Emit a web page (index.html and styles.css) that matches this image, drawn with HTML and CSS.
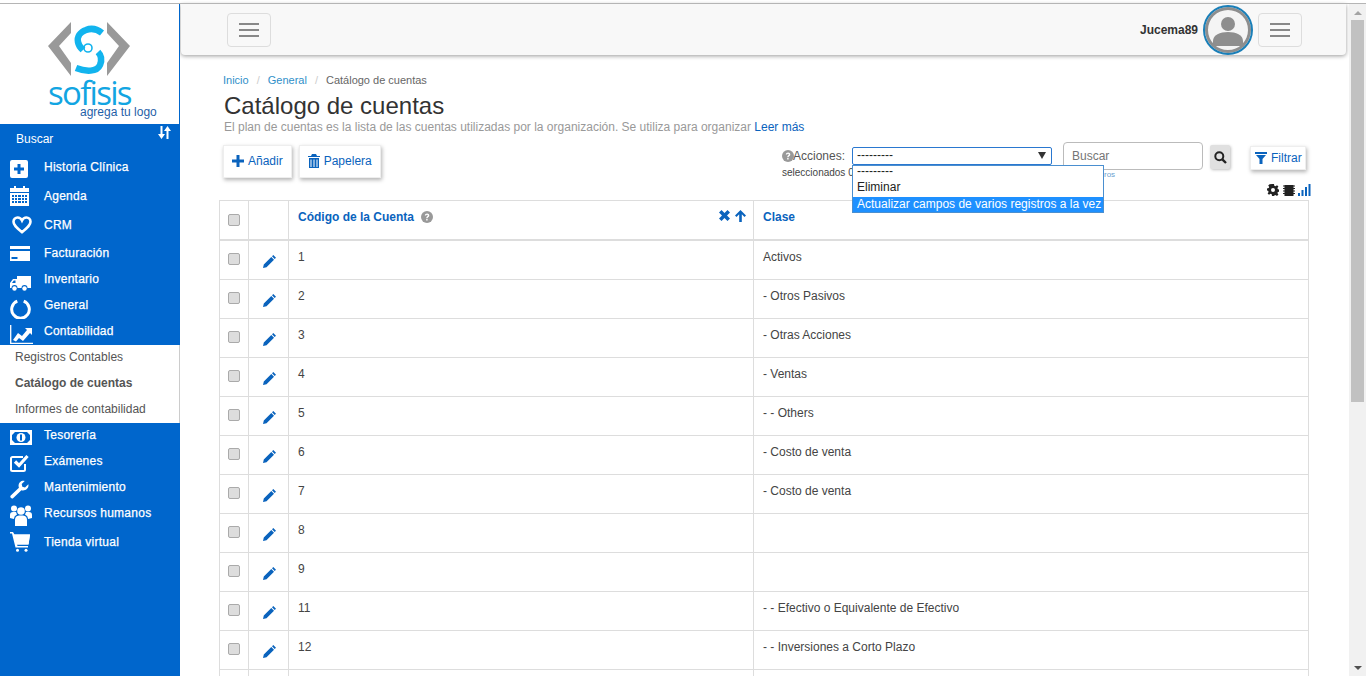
FILE: index.html
```html
<!DOCTYPE html>
<html>
<head>
  <meta charset="UTF-8">
  <title>Catálogo de cuentas</title>
  <link rel="stylesheet" href="styles.css">
</head>
<body>
  <svg class="defs" width="0" height="0">
    <symbol id="pencil" viewBox="0 0 13 13"><path d="M0 13l.8-3.500 7.500-7.500 2.700 2.700-7.500 7.500zM9 1.300L10.300 0 13 2.700 11.700 4z" fill="#0a63bd"/></symbol>
    <symbol id="help" viewBox="0 0 12 12"><circle cx="6" cy="6" r="6" fill="#999"/><path d="M3.800 4.600C3.900 3.200 4.900 2.500 6.100 2.500c1.300 0 2.200.8 2.200 1.900 0 1.600-1.700 1.500-1.700 2.800H5.200c0-2 1.600-1.900 1.600-2.800 0-.4-.3-.7-.8-.7-.5 0-.8.300-.9.900zM5.200 8h1.400v1.400H5.200z" fill="#fff"/></symbol>
  </svg>

  <div class="app">
    <aside class="sidebar">
      <div class="logo">
        <svg class="logo-mark" width="84" height="56" viewBox="0 0 84 56">
          <path d="M23 0 L0 24 L23 54 L23 41 L11 24 L23 11 Z" fill="#999"/>
          <path d="M59 0 L82 24 L59 54 L59 41 L71 24 L59 11 Z" fill="#999"/>
          <path d="M54 11 C49 7 43 6 38 8 C32 10 29 15 30 20 C31 25 34 27 35 28 M50 30 C53 33 54 38 52 43 C49 50 38 50 28 46" fill="none" stroke="#12b4ee" stroke-width="6.500"/>
          <circle cx="40" cy="26" r="4" fill="none" stroke="#12b4ee" stroke-width="1.600"/>
        </svg>
        <span class="logo-name">sofisis</span>
        <span class="logo-sub">agrega tu logo</span>
      </div>
      <div class="search-row">
        <span>Buscar</span>
        <svg class="sort-icon" width="13" height="13" viewBox="0 0 13 13"><path d="M2.500 0h2v8h2.500L3.500 13 0 8h2.500zM8.500 13V5H6L9.500 0 13 5h-2.500v8z" fill="#fff"/></svg>
      </div>
      <nav>
        <a class="menu-item tall">
          <svg class="icon-slight" width="18" height="18" viewBox="0 0 18 18"><path d="M2 0h14a2 2 0 0 1 2 2v14a2 2 0 0 1-2 2H2a2 2 0 0 1-2-2V2a2 2 0 0 1 2-2zm5.500 4v3.500H4v3h3.500V14h3v-3.500H14v-3h-3.500V4z" fill="#fff" fill-rule="evenodd"/></svg>
          Historia Clínica
        </a>
        <a class="menu-item tall">
          <svg width="19" height="20" viewBox="0 0 19 20"><path d="M0 2h4V0h2v2h7V0h2v2h4v4H0zM0 7h19v13H0zm2 2v2h2V9zm3 0v2h2V9zm3 0v2h3V9zm4 0v2h2V9zm3 0v2h2V9zM2 12v2h2v-2zm3 0v2h2v-2zm3 0v2h3v-2zm4 0v2h2v-2zm3 0v2h2v-2zM2 15v2h2v-2zm3 0v2h2v-2zm3 0v2h3v-2zm4 0v2h2v-2zm3 0v2h2v-2z" fill="#fff" fill-rule="evenodd"/></svg>
          Agenda
        </a>
        <a class="menu-item tall">
          <svg class="heart" width="20" height="18" viewBox="0 0 20 18"><path d="M10 16.200C4.200 11.500 1.500 9 1.500 5.800 1.500 3.200 3.400 1.500 5.600 1.500 7.500 1.500 9 2.500 10 4.500c1-2 2.500-3 4.400-3 2.200 0 4.100 1.700 4.100 4.300 0 3.200-2.700 5.700-8.500 10.400z" fill="none" stroke="#fff" stroke-width="2.600"/></svg>
          CRM
        </a>
        <a class="menu-item medium">
          <svg width="20" height="15" viewBox="0 0 20 15"><path d="M0 0h20v3H0zM0 5h20v10H0zm1.500 6v2h6v-2z" fill="#fff" fill-rule="evenodd"/></svg>
          Facturación
        </a>
        <a class="menu-item">
          <svg class="icon-lower" width="21" height="15" viewBox="0 0 21 15"><path d="M7 0h14v12h-3.500a3 3 0 0 0-6 0H7.500a3 3 0 0 0-6 0H0V7l3-4h4zM2 7h3.500V4.500H3.800z" fill="#fff" fill-rule="evenodd"/><circle cx="4.500" cy="12.500" r="2.200" fill="#fff"/><circle cx="14.500" cy="12.500" r="2.200" fill="#fff"/></svg>
          Inventario
        </a>
        <a class="menu-item">
          <svg class="icon-lower" width="21" height="20" viewBox="0 0 21 20"><path d="M7.300 2.200A8.800 8.800 0 1 0 13.700 2.200" fill="none" stroke="#fff" stroke-width="3"/></svg>
          General
        </a>
        <a class="menu-item">
          <svg class="icon-low" width="23" height="19" viewBox="0 0 23 19"><path d="M.7 0v18.300H23" fill="none" stroke="#fff" stroke-width="1.300"/><path d="M3 15l5-7 4 3 5-6-2-2h7v7l-2-2-7 8-4-3-3 3.500z" fill="#fff"/></svg>
          Contabilidad
        </a>
      </nav>
      <div class="submenu">
        <a>Registros Contables</a>
        <a class="current">Catálogo de cuentas</a>
        <a>Informes de contabilidad</a>
      </div>
      <nav>
        <a class="menu-item">
          <svg class="icon-slight" width="22" height="15" viewBox="0 0 22 15"><path d="M0 0h22v15H0zm5 2L2 5v5l3 3h12l3-3V5l-3-3z" fill="#fff" fill-rule="evenodd"/><circle cx="11" cy="7.500" r="4.500" fill="#fff"/><path d="M10 4.500h2v6h-2z" fill="#0066cc"/></svg>
          Tesorería
        </a>
        <a class="menu-item">
          <svg class="icon-slight" width="19" height="18" viewBox="0 0 19 18"><path d="M15 10v5.500a1.500 1.500 0 0 1-1.500 1.500H2.500A1.500 1.500 0 0 1 1 15.500v-11A1.500 1.500 0 0 1 2.500 3H13" fill="none" stroke="#fff" stroke-width="2"/><path d="M5 7.500l4 4L17.500 2" fill="none" stroke="#fff" stroke-width="3.200"/></svg>
          Exámenes
        </a>
        <a class="menu-item">
          <svg class="icon-low" width="19" height="20" viewBox="0 0 20 20"><path d="M19.300 4l-3.500 3.300L13 6.500l-.7-2.700L15.500.5C12.500-.5 9 1.800 9 5.500c0 .8.200 1.500.400 2L.8 15.800c-1.500 1.500.8 4.500 2.700 2.700l8.500-8.300c3.800 1.200 8.300-1.700 7.300-6.200z" fill="#fff"/></svg>
          Mantenimiento
        </a>
        <a class="menu-item">
          <svg class="icon-slight" width="22" height="21" viewBox="0 0 22 21"><circle cx="11" cy="6" r="3.800" fill="#fff"/><circle cx="4" cy="3.500" r="3" fill="#fff"/><circle cx="18" cy="3.500" r="3" fill="#fff"/><path d="M5 21v-6a4.500 4.500 0 0 1 4-4.500h4a4.500 4.500 0 0 1 4 4.500v6zM0 13v-3a3 3 0 0 1 3-3h3l1 2.500A5.500 5.500 0 0 0 3.800 14zM22 13v-3a3 3 0 0 0-3-3h-3l-1 2.500a5.500 5.500 0 0 1 3.200 4.500z" fill="#fff"/></svg>
          Recursos humanos
        </a>
        <a class="menu-item tallest">
          <svg width="20" height="20" viewBox="0 0 20 20"><path d="M0 0h3l1.500 2.500H20l-1.500 10H7L7.500 14H18v1.500H5.500L2 1.500H0z" fill="#fff"/><path d="M4 2.500h16l-1.500 10H6z" fill="#fff"/><circle cx="7.500" cy="18.300" r="1.500" fill="#fff"/><circle cx="16" cy="18.300" r="1.500" fill="#fff"/></svg>
          Tienda virtual
        </a>
      </nav>
    </aside>

    <main class="main">
      <header class="topbar">
        <button class="burger"><i></i><i></i><i></i></button>
        <div class="user">
          <b>Jucema89</b>
          <span class="avatar">
            <svg width="32" height="32" viewBox="0 0 32 32"><circle cx="16" cy="8" r="7" fill="#8e8e8e"/><path d="M1 30c0-1 0-3 0-5 0-6 7-9 15-9s15 3 15 9v5z" fill="#8e8e8e"/></svg>
          </span>
          <button class="burger"><i></i><i></i><i></i></button>
        </div>
      </header>

      <div class="content">
        <div class="crumbs"><a>Inicio</a><em>/</em><a>General</a><em>/</em><span>Catálogo de cuentas</span></div>
        <h1>Catálogo de cuentas</h1>
        <p class="lead">El plan de cuentas es la lista de las cuentas utilizadas por la organización. Se utiliza para organizar <a>Leer más</a></p>

        <div class="toolbar">
          <div class="buttons">
            <button class="btn">
              <svg width="12" height="12" viewBox="0 0 12 12"><path d="M4.500 0h3v4.500H12v3H7.500V12h-3V7.500H0v-3h4.500z" fill="#0a63bd"/></svg>
              Añadir
            </button>
            <button class="btn">
              <svg width="12" height="14" viewBox="0 0 12 14"><path d="M4 0h4l1 2h3v1H0V2h3zM1 4h10v10H1zM2.500 5.500V13h1V5.500zm3 0V13h1V5.500zm3 0V13h1V5.500z" fill="#0a63bd" fill-rule="evenodd"/></svg>
              Papelera
            </button>
          </div>
          <div class="actions">
            <div class="action-box">
              <div class="action-line">
                <svg class="help" width="12" height="12"><use href="#help"/></svg>
                <label>Acciones:</label>
                <div class="select">---------<span class="caret"></span>
                  <div class="options">
                    <div class="opt-dash">---------</div>
                    <div class="opt-plain">Eliminar</div>
                    <div class="selected">Actualizar campos de varios registros a la vez</div>
                  </div>
                </div>
              </div>
              <small class="selected-count">seleccionados 0</small>
            </div>
            <div class="search-box">
              <input class="search" placeholder="Buscar">
              <small class="search-hint">ros</small>
            </div>
            <button class="search-btn">
              <svg width="13" height="13" viewBox="0 0 13 13"><circle cx="5.300" cy="5.300" r="4" fill="none" stroke="#222" stroke-width="2"/><path d="M8.300 8.300L12 12" stroke="#222" stroke-width="2.400"/></svg>
            </button>
            <button class="btn filter">
              <svg width="12" height="12" viewBox="0 0 12 12"><path d="M0 0h12v2H0zM1 3h10L7.500 7v5h-3V7z" fill="#0a63bd"/></svg>
              Filtrar
            </button>
          </div>
        </div>

        <div class="tools">
          <svg width="12" height="12" viewBox="0 0 12 12"><path d="M5 0h2l.3 1.700 1.200.5L10 1.200l1.400 1.400-1 1.500.5 1.200 1.700.3v2l-1.700.3-.5 1.200 1 1.500-1.400 1.400-1.500-1-1.200.5L7 12H5l-.3-1.700-1.200-.5-1.500 1L.6 9.400l1-1.500-.5-1.200L0 6.400v-2l1.700-.3.500-1.200-1-1.500L2.600.200zM6 4a2 2 0 1 0 0 4 2 2 0 0 0 0-4z" fill="#222" fill-rule="evenodd"/></svg>
          <svg class="chip" width="12" height="11" viewBox="0 0 12 11"><path d="M1.500 0h9v11h-9zM0 .5h1.500v1H0zM0 3h1.500v1H0zM0 5.500h1.500v1H0zM0 8h1.500v1H0zM10.500 .5H12v1h-1.500zM10.500 3H12v1h-1.500zM10.500 5.500H12v1h-1.500zM10.500 8H12v1h-1.500z" fill="#222"/></svg>
          <svg width="13" height="12" viewBox="0 0 13 12"><path d="M0 9h2v3H0zM3.500 6h2v6h-2zM7 3h2v9H7zM10.500 0h2v12h-2z" fill="#0a63bd"/></svg>
        </div>

        <table class="grid">
          <thead>
            <tr>
              <th class="c-check"><span class="check"></span></th>
              <th class="c-edit"></th>
              <th class="c-code">
                <div class="th-inner">
                  <span>Código de la Cuenta<svg class="help th-help" width="12" height="12"><use href="#help"/></svg></span>
                  <span class="sort-tools">
                    <svg width="11" height="11" viewBox="0 0 11 11"><path d="M2.500 0L5.500 3l3-3L11 2.500l-3 3 3 3L8.500 11l-3-3-3 3L0 8.500l3-3-3-3z" fill="#0a63bd"/></svg>
                    <svg width="11" height="12" viewBox="0 0 11 12"><path d="M5.500 0L11 5.500 9.500 7 6.800 4.300V12H4.200V4.300L1.500 7 0 5.500z" fill="#0a63bd"/></svg>
                  </span>
                </div>
              </th>
              <th>Clase</th>
            </tr>
          </thead>
          <tbody>
            <tr><td><span class="check"></span></td><td><svg class="pencil" width="13" height="13"><use href="#pencil"/></svg></td><td>1</td><td>Activos</td></tr>
            <tr><td><span class="check"></span></td><td><svg class="pencil" width="13" height="13"><use href="#pencil"/></svg></td><td>2</td><td>- Otros Pasivos</td></tr>
            <tr><td><span class="check"></span></td><td><svg class="pencil" width="13" height="13"><use href="#pencil"/></svg></td><td>3</td><td>- Otras Acciones</td></tr>
            <tr><td><span class="check"></span></td><td><svg class="pencil" width="13" height="13"><use href="#pencil"/></svg></td><td>4</td><td>- Ventas</td></tr>
            <tr><td><span class="check"></span></td><td><svg class="pencil" width="13" height="13"><use href="#pencil"/></svg></td><td>5</td><td>- - Others</td></tr>
            <tr><td><span class="check"></span></td><td><svg class="pencil" width="13" height="13"><use href="#pencil"/></svg></td><td>6</td><td>- Costo de venta</td></tr>
            <tr><td><span class="check"></span></td><td><svg class="pencil" width="13" height="13"><use href="#pencil"/></svg></td><td>7</td><td>- Costo de venta</td></tr>
            <tr><td><span class="check"></span></td><td><svg class="pencil" width="13" height="13"><use href="#pencil"/></svg></td><td>8</td><td></td></tr>
            <tr><td><span class="check"></span></td><td><svg class="pencil" width="13" height="13"><use href="#pencil"/></svg></td><td>9</td><td></td></tr>
            <tr><td><span class="check"></span></td><td><svg class="pencil" width="13" height="13"><use href="#pencil"/></svg></td><td>11</td><td>- - Efectivo o Equivalente de Efectivo</td></tr>
            <tr><td><span class="check"></span></td><td><svg class="pencil" width="13" height="13"><use href="#pencil"/></svg></td><td>12</td><td>- - Inversiones a Corto Plazo</td></tr>
            <tr><td></td><td></td><td></td><td></td></tr>
          </tbody>
        </table>
      </div>
    </main>

    <div class="scrollbar">
      <span class="arrow-up"></span>
      <span class="thumb"></span>
      <span class="arrow-down"></span>
    </div>
  </div>
</body>
</html>
```

FILE: styles.css
```css
* {
  box-sizing: border-box;
}

html, body {
  margin: 0;
  height: 100%;
  overflow: hidden;
}

body {
  font-family: "Liberation Sans", Arial, sans-serif;
  font-size: 12px;
  color: #333;
  background: #fff;
}

a {
  color: #0a63bd;
  text-decoration: none;
}

button {
  font-family: inherit;
}

.defs {
  position: absolute;
}

.app {
  position: relative;
  display: flex;
  height: 676px;
  padding-top: 3px;
  background: #fff;
  overflow: hidden;
}

/* thin line above everything */
.app::before {
  content: "";
  position: absolute;
  top: 3px;
  left: 0;
  right: 0;
  height: 1px;
  background: #b5b5b5;
  z-index: 5;
}

/* sidebar */
.sidebar {
  width: 180px;
  flex: none;
  background: #0066cc;
  color: #fff;
}

.logo {
  position: relative;
  height: 121px;
  background: #fff;
  border-right: 1px solid #0066cc;
}

.logo-mark {
  position: absolute;
  left: 48px;
  top: 19px;
}

.logo-name {
  position: absolute;
  left: 48px;
  top: 79px;
  font-family: "Open Sans", sans-serif;
  font-size: 33px;
  letter-spacing: -1.7px;
  line-height: 22px;
  color: #12a5e2;
}

.logo-sub {
  position: absolute;
  left: 80px;
  top: 102px;
  font-size: 12px;
  line-height: 14px;
  color: #1f5fa8;
}

.search-row {
  position: relative;
  height: 28px;
  padding: 8px 0 0 16px;
  font-size: 12px;
}

.sort-icon {
  position: absolute;
  right: 9px;
  top: 2px;
}

.menu-item {
  display: grid;
  grid-template-columns: 34px 1fr;
  grid-template-rows: minmax(0, 1fr);
  align-items: center;
  height: 26px;
  padding: 0 0 2px 10px;
  color: #fff;
  font-size: 12px;
  letter-spacing: .25px;
  -webkit-text-stroke: .25px #fff;
}

.icon-slight {
  margin-top: 4px;
}

.icon-low {
  margin-top: 6px;
}

.icon-lower {
  margin-top: 8px;
}

.heart {
  margin-left: 2px;
}

.tall {
  height: 29px;
  padding-bottom: 0;
}

.medium {
  height: 28px;
  padding-bottom: 0;
}

.tallest {
  height: 31px;
}

.submenu {
  background: #fff;
  border-right: 1px solid #ccc;
}

.submenu a {
  display: flex;
  align-items: center;
  height: 26px;
  padding: 0 0 2px 15px;
  color: #555;
  font-size: 12px;
}

.submenu .current {
  font-weight: bold;
}

/* main */
.main {
  flex: 1;
  min-width: 0;
  padding-top: 1px;
}

.topbar {
  display: flex;
  align-items: center;
  justify-content: space-between;
  height: 51px;
  margin-left: 1px;
  margin-right: 3px;
  padding: 0 44px 0 46px;
  background: #f8f8f8;
  border-radius: 0 0 4px 4px;
  box-shadow: 0 1px 4px rgba(0, 0, 0, .4);
}

.burger {
  display: flex;
  flex-direction: column;
  justify-content: center;
  gap: 4px;
  width: 44px;
  height: 34px;
  padding: 0 11px;
  background: #f8f8f8;
  border: 1px solid #ddd;
  border-radius: 4px;
}

.burger i {
  display: block;
  height: 2px;
  width: 100%;
  background: #888;
}

.user {
  display: flex;
  align-items: center;
}

.user b {
  font-size: 12px;
  margin-right: 5px;
}

.avatar {
  display: flex;
  align-items: flex-end;
  justify-content: center;
  width: 50px;
  height: 50px;
  margin-right: 5px;
  padding-bottom: 5px;
  background: #f4f4f4;
  border-radius: 50%;
  border: 2px solid #1a7fb8;
  box-shadow: inset 0 0 0 3px #8e8e8e;
  overflow: hidden;
}

.content {
  padding: 0 40px 0 38px;
}

.crumbs {
  margin: 18px 0 0 5px;
  height: 14px;
  font-size: 11px;
  line-height: 14px;
  color: #666;
}

.crumbs a {
  color: #2f8fc9;
}

.crumbs em {
  margin: 0 8px;
  font-style: normal;
  color: #ccc;
}

h1 {
  margin: 5px 0 0 6px;
  font-size: 24px;
  font-weight: normal;
  line-height: 28px;
  color: #333;
}

.lead {
  margin: 0 0 0 6px;
  font-size: 12px;
  line-height: 14px;
  color: #999;
}

.toolbar {
  display: flex;
  justify-content: space-between;
  margin-top: 11px;
  height: 40px;
}

.buttons {
  display: flex;
  gap: 7px;
  margin-left: 5px;
}

.btn {
  display: flex;
  align-items: center;
  gap: 4px;
  height: 33px;
  padding: 0 8px 2px;
  background: #fff;
  border: 1px solid #eee;
  font-size: 12px;
  color: #0a63bd;
  box-shadow: 1px 2px 4px rgba(0, 0, 0, .3);
}

.actions {
  display: flex;
  align-items: flex-start;
  margin-right: 3px;
}

.action-box {
  width: 281px;
}

.action-line {
  display: flex;
  align-items: center;
  height: 20px;
  margin-top: 1px;
}

.action-line .help {
  margin-right: -1px;
}

.action-line label {
  margin-right: 7px;
  color: #555;
}

.select {
  position: relative;
  width: 200px;
  height: 18px;
  padding-left: 4px;
  border: 1px solid #2a78d0;
  border-radius: 2px;
  font-size: 12px;
  line-height: 15px;
  color: #222;
}

.caret {
  position: absolute;
  right: 5px;
  top: 4px;
  border-left: 4px solid transparent;
  border-right: 4px solid transparent;
  border-top: 7px solid #333;
}

.options {
  position: absolute;
  left: -1px;
  top: 17px;
  width: 252px;
  background: #fff;
  border: 1px solid #4a8fd0;
  z-index: 10;
}

.options div {
  padding-left: 4px;
  white-space: nowrap;
}

.options .opt-dash {
  height: 12px;
  line-height: 11px;
}

.options .opt-plain {
  height: 19px;
  line-height: 19px;
}

.options .selected {
  height: 15px;
  line-height: 14px;
  background: #1e90ff;
  color: #fff;
}

.selected-count {
  display: block;
  margin-top: 1px;
  font-size: 10px;
  color: #444;
}

.search-box {
  position: relative;
  margin-top: -3px;
  width: 140px;
}

.search {
  display: block;
  width: 140px;
  height: 28px;
  padding: 0 8px;
  font-family: inherit;
  font-size: 12px;
  border: 1px solid #bbb;
  border-radius: 4px;
}

.search-hint {
  position: absolute;
  left: 41px;
  top: 28px;
  font-size: 8px;
  color: #6a9fd0;
}

.search-btn {
  display: flex;
  align-items: center;
  justify-content: center;
  width: 20px;
  height: 24px;
  margin: 0 0 0 7px;
  padding: 0;
  background: #e0e0e0;
  border: 0;
  border-radius: 2px;
  box-shadow: 1px 1px 3px rgba(0, 0, 0, .25);
}

.filter {
  width: 56px;
  height: 24px;
  margin: 1px 0 0 20px;
  padding: 0 0 0 4px;
  white-space: nowrap;
}

.tools {
  display: flex;
  justify-content: flex-end;
  align-items: center;
  gap: 4px;
  height: 14px;
  margin-top: -2px;
  margin-bottom: 3px;
  margin-right: -2px;
}

.chip {
  margin-right: -1px;
}

/* table */
.grid {
  width: 1090px;
  margin-left: 1px;
  border-collapse: collapse;
  table-layout: fixed;
}

.grid th, .grid td {
  border: 1px solid #ddd;
  padding: 0;
  text-align: left;
  vertical-align: top;
}

.grid th {
  height: 39px;
  border-bottom: 2px solid #ddd;
  padding: 9px 9px 0;
  color: #0a63bd;
  font-size: 12px;
}

.grid th.c-check, .grid th.c-edit {
  padding: 13px 0 0;
  text-align: center;
}

.c-check {
  width: 29px;
}

.c-edit {
  width: 40px;
}

.c-code {
  width: 465px;
}

.th-inner {
  display: flex;
  justify-content: space-between;
}

.sort-tools {
  display: flex;
  gap: 5px;
  margin-right: -2px;
}

.help {
  vertical-align: -2px;
}

.th-help {
  margin-left: 7px;
}

.grid td {
  height: 39px;
  padding: 9px 9px 0;
  color: #444;
}

.grid td:nth-child(1), .grid td:nth-child(2) {
  padding: 12px 0 0;
  text-align: center;
}

/* first row is a pixel taller under the thick header line */
.grid tbody tr:first-child td {
  height: 40px;
}

.check {
  display: inline-block;
  width: 12px;
  height: 12px;
  background: #ddd;
  border: 1px solid #aaa;
  border-radius: 2px;
}

.pencil {
  margin: 2px 0 0 2px;
}

/* scroll bar */
.scrollbar {
  position: relative;
  width: 17px;
  flex: none;
  margin-top: 1px;
  background: #f1f1f1;
}

.thumb {
  position: absolute;
  left: 2px;
  right: 2px;
  top: 16px;
  height: 382px;
  background: #c1c1c1;
}

.arrow-up, .arrow-down {
  position: absolute;
  left: 5px;
  border-left: 4px solid transparent;
  border-right: 4px solid transparent;
}

.arrow-up {
  top: 7px;
  border-bottom: 4px solid #a3a3a3;
}

.arrow-down {
  bottom: 6px;
  border-top: 4px solid #505050;
}
```
